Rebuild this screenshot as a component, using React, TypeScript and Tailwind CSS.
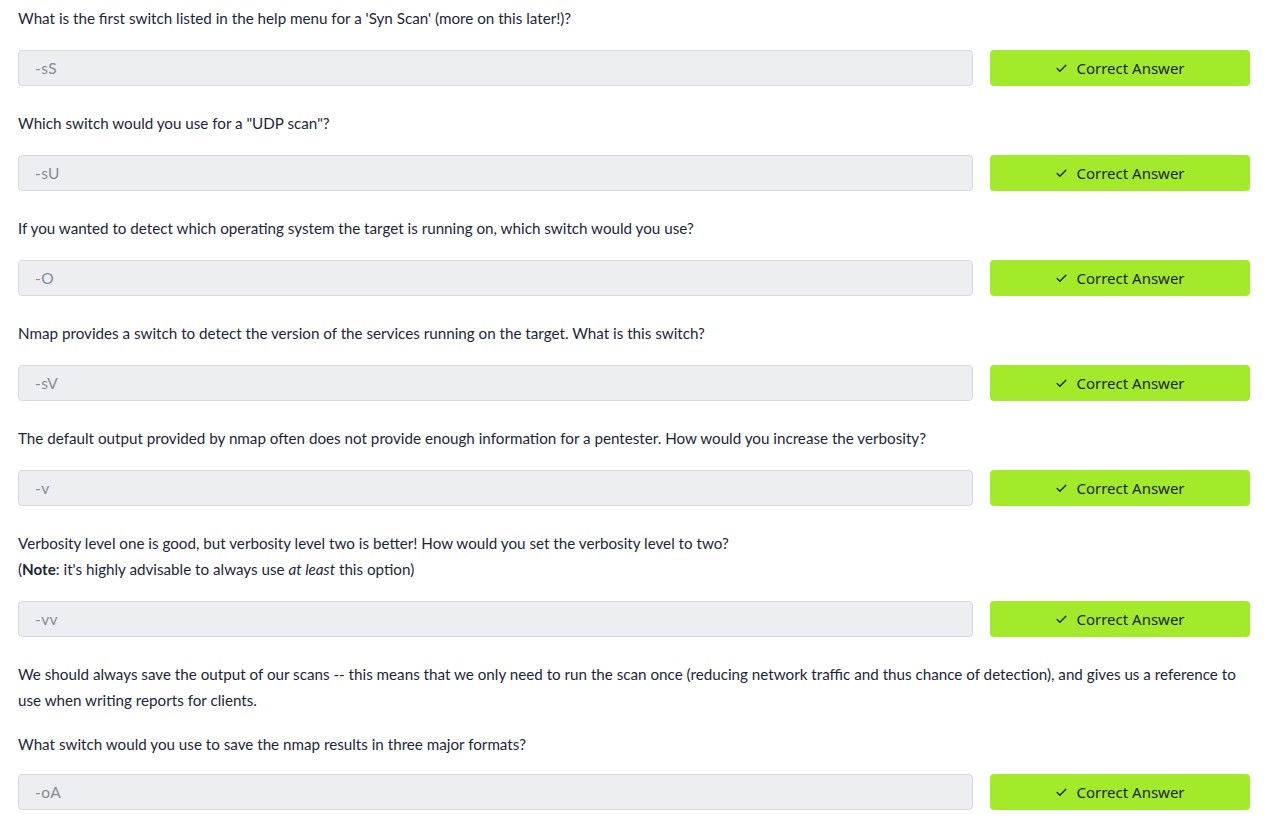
import { Check } from 'lucide-react'

type Question = {
  lines: React.ReactNode[]
  answer: string
}

const questions: Question[] = [
  { lines: ["What is the first switch listed in the help menu for a 'Syn Scan' (more on this later!)?"], answer: '-sS' },
  { lines: ['Which switch would you use for a "UDP scan"?'], answer: '-sU' },
  { lines: ['If you wanted to detect which operating system the target is running on, which switch would you use?'], answer: '-O' },
  { lines: ['Nmap provides a switch to detect the version of the services running on the target. What is this switch?'], answer: '-sV' },
  { lines: ['The default output provided by nmap often does not provide enough information for a pentester. How would you increase the verbosity?'], answer: '-v' },
  {
    lines: [
      <>
        Verbosity level one is good, but verbosity level two is better! How would you set the verbosity level to two?
        <br />
        (<b>Note</b>: it's highly advisable to always use <i>at least</i> this option)
      </>,
    ],
    answer: '-vv',
  },
  {
    lines: [
      'We should always save the output of our scans -- this means that we only need to run the scan once (reducing network traffic and thus chance of detection), and gives us a reference to use when writing reports for clients.',
      'What switch would you use to save the nmap results in three major formats?',
    ],
    answer: '-oA',
  },
]

function AnswerRow({ answer }: { answer: string }) {
  return (
    <div className="flex gap-[17px]">
      <div className="flex-1 h-[36px] rounded-[4px] border border-[#d6d9df] bg-[#eceef2] px-[16px] flex items-center text-[15.5px] tracking-[0.4px] text-[#858b94]">
        {answer}
      </div>
      <button className="w-[260px] h-[36px] rounded-[4px] bg-[#a3ea2a] flex items-center justify-center gap-[8px] text-[15px] text-[#1b2530] [font-family:Noto_Sans,sans-serif]">
        <Check size={13} strokeWidth={2.5} />
        Correct Answer
      </button>
    </div>
  )
}

export default function App() {
  return (
    <div className="min-h-screen bg-white pl-[18px] pr-[22px] pt-[5px] [font-family:Lato,sans-serif] text-[15.2px] leading-[26px] text-[#1c2639]">
      <div className="flex flex-col">
        {questions.map((q, i) => (
          <div key={i} className="flex flex-col pb-[24px]">
            <div className={`flex flex-col gap-[18px] ${q.lines.length > 1 ? 'mb-[17px]' : 'mb-[19px]'}`}>
              {q.lines.map((line, j) => (
                <p key={j}>{line}</p>
              ))}
            </div>
            <AnswerRow answer={q.answer} />
          </div>
        ))}
      </div>
    </div>
  )
}
